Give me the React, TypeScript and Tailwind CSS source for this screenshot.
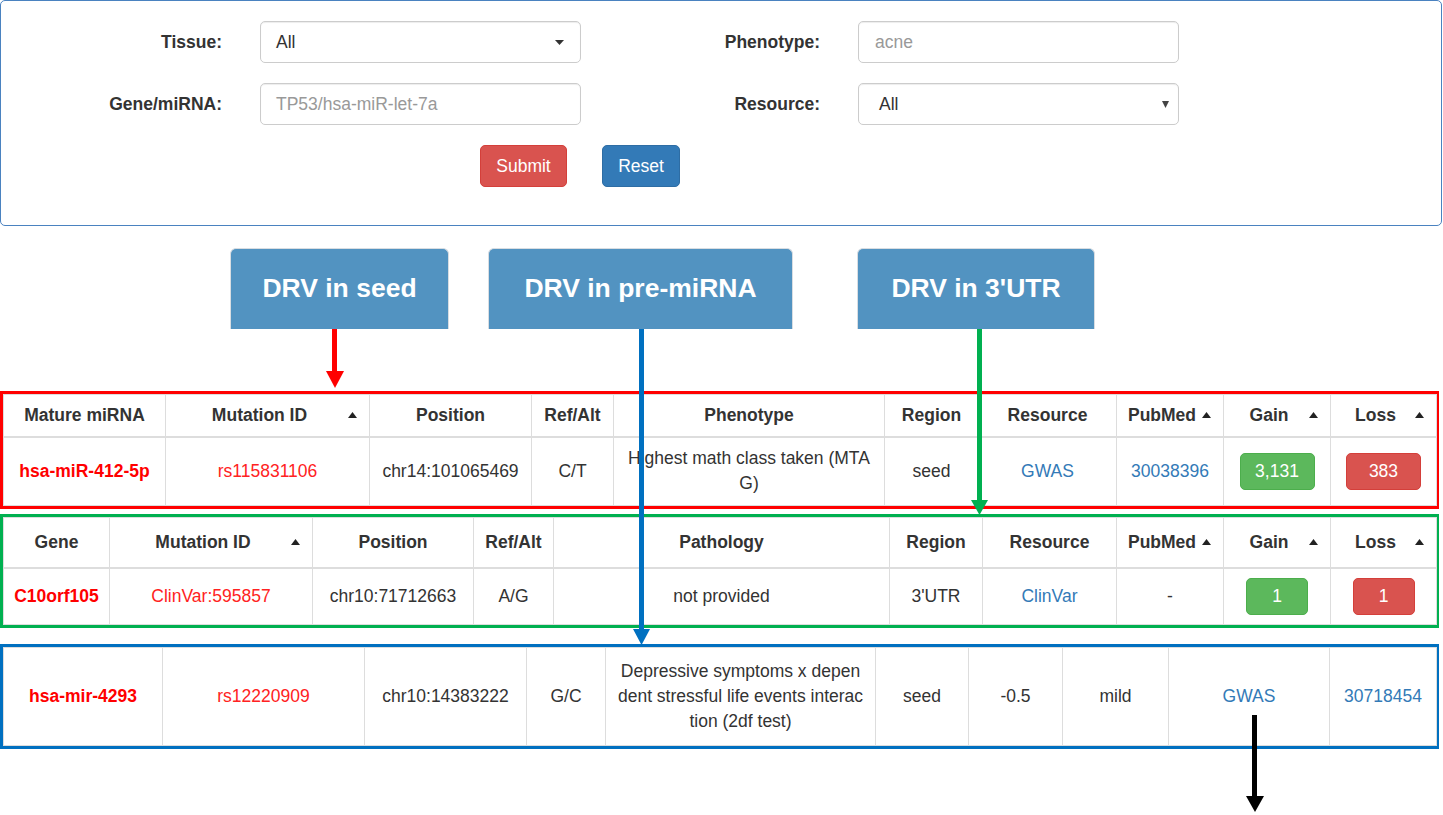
import React from 'react';

const font = { fontFamily: '"Liberation Sans", Arial, sans-serif' };

const SortCaret: React.FC = () => (
    <svg className="absolute right-[12px] top-1/2 -translate-y-1/2" width="9" height="6" viewBox="0 0 9 6">
        <polygon points="0,6 9,6 4.5,0" fill="#222" />
    </svg>
);

type Head = { label: string; sort?: boolean };

const HeaderCell: React.FC<{ head: Head; height: string }> = ({ head, height }) => (
    <th
        className={`relative ${height} border border-[#ddd] border-b-2 font-bold text-[#333] text-center align-middle py-0 ${head.sort ? 'pl-[6px] pr-[22px]' : 'px-[10px]'}`}
    >
        {head.label}
        {head.sort && <SortCaret />}
    </th>
);

const Badge: React.FC<{ value: string; color: 'green' | 'red'; width: string }> = ({ value, color, width }) => (
    <span
        className={`inline-flex items-center justify-center h-[37px] rounded-[5px] text-white border ${width} ${
            color === 'green' ? 'bg-[#5cb85c] border-[#4cae4c]' : 'bg-[#d9534f] border-[#d43f3a]'
        }`}
    >
        {value}
    </span>
);

const td = 'border border-[#ddd] text-center align-middle px-[10px] text-[#333] leading-[25px]';

const DrvBox: React.FC<{ label: string; width: string }> = ({ label, width }) => (
    <div
        className={`${width} h-[81px] bg-[#5293c1] rounded-t-[6px] border-x border-t border-[#d8dde2] flex items-center justify-center text-white font-bold text-[26.5px]`}
    >
        {label}
    </div>
);

// annotation arrows drawn over the page
const Arrows: React.FC = () => (
    <svg className="absolute left-0 top-0 pointer-events-none" width="1443" height="815" viewBox="0 0 1443 815">
        <line x1="334.5" y1="329" x2="334.5" y2="373" stroke="#ff0000" strokeWidth="5" />
        <polygon points="326,371 344,371 335,388" fill="#ff0000" />
        <line x1="641.5" y1="329" x2="641.5" y2="631" stroke="#0070c0" strokeWidth="5" />
        <polygon points="633,629 650,629 641.5,645" fill="#0070c0" />
        <line x1="979.5" y1="329" x2="979.5" y2="502" stroke="#00b050" strokeWidth="5" />
        <polygon points="971,500 988,500 979.5,515" fill="#00b050" />
        <line x1="1254.5" y1="715" x2="1254.5" y2="798" stroke="#000" strokeWidth="5" />
        <polygon points="1246,796 1264,796 1255,812" fill="#000" />
    </svg>
);

const seedHeads: Head[] = [
    { label: 'Mature miRNA' },
    { label: 'Mutation ID', sort: true },
    { label: 'Position' },
    { label: 'Ref/Alt' },
    { label: 'Phenotype' },
    { label: 'Region' },
    { label: 'Resource' },
    { label: 'PubMed', sort: true },
    { label: 'Gain', sort: true },
    { label: 'Loss', sort: true },
];

const utrHeads: Head[] = [
    { label: 'Gene' },
    { label: 'Mutation ID', sort: true },
    { label: 'Position' },
    { label: 'Ref/Alt' },
    { label: 'Pathology' },
    { label: 'Region' },
    { label: 'Resource' },
    { label: 'PubMed', sort: true },
    { label: 'Gain', sort: true },
    { label: 'Loss', sort: true },
];

const seedCols = [162, 204, 162, 82, 271, 94, 138, 107, 107, 106];
const utrCols = [106, 203, 161, 80, 336, 93, 134, 107, 107, 106];
const preCols = [159, 202, 162, 79, 270, 93, 94, 106, 161, 107];

const Cols: React.FC<{ widths: number[] }> = ({ widths }) => (
    <colgroup>
        {widths.map((w, i) => (
            <col key={i} style={{ width: w }} />
        ))}
    </colgroup>
);

export default function App() {
    return (
        <div className="relative w-[1443px] h-[815px] bg-white text-[17.5px] text-[#333] overflow-hidden" style={font}>
            {/* search form */}
            <div className="w-[1442px] h-[226px] border border-[#4a82c0] rounded-[5px] pt-[20px]">
                <div className="flex items-center h-[42px]">
                    <label className="w-[221px] text-right font-bold">Tissue:</label>
                    <div className="ml-[38px] w-[321px] h-[42px] border border-[#ccc] rounded-[5px] shadow-[inset_0_1px_1px_rgba(0,0,0,0.075)] flex items-center justify-between pl-[15px] pr-[16px]">
                        <span className="text-[#333]">All</span>
                        <svg width="9" height="5" viewBox="0 0 9 5">
                            <polygon points="0,0 9,0 4.5,5" fill="#333" />
                        </svg>
                    </div>
                    <label className="w-[239px] text-right font-bold">Phenotype:</label>
                    <div className="ml-[38px] w-[321px] h-[42px] border border-[#ccc] rounded-[5px] shadow-[inset_0_1px_1px_rgba(0,0,0,0.075)] flex items-center pl-[16px]">
                        <span className="text-[#999]">acne</span>
                    </div>
                </div>
                <div className="flex items-center h-[42px] mt-[20px]">
                    <label className="w-[221px] text-right font-bold">Gene/miRNA:</label>
                    <div className="ml-[38px] w-[321px] h-[42px] border border-[#ccc] rounded-[5px] shadow-[inset_0_1px_1px_rgba(0,0,0,0.075)] flex items-center pl-[15px]">
                        <span className="text-[#999]">TP53/hsa-miR-let-7a</span>
                    </div>
                    <label className="w-[239px] text-right font-bold">Resource:</label>
                    <div className="ml-[38px] w-[321px] h-[42px] border border-[#ccc] rounded-[5px] shadow-[inset_0_1px_1px_rgba(0,0,0,0.075)] flex items-center justify-between pl-[20px] pr-[9px]">
                        <span className="text-[#333]">All</span>
                        <svg width="7" height="7" viewBox="0 0 7 7">
                            <polygon points="0,0 7,0 3.5,7" fill="#444" />
                        </svg>
                    </div>
                </div>
                <div className="flex items-center mt-[20px]">
                    <button className="ml-[479px] w-[87px] h-[42px] rounded-[5px] bg-[#d9534f] border border-[#d43f3a] text-white">
                        Submit
                    </button>
                    <button className="ml-[35px] w-[78px] h-[42px] rounded-[5px] bg-[#337ab7] border border-[#2e6da4] text-white">
                        Reset
                    </button>
                </div>
            </div>

            {/* region labels */}
            <div className="flex mt-[22px] ml-[230px] gap-[39px]">
                <DrvBox label="DRV in seed" width="w-[219px]" />
                <DrvBox label="DRV in pre-miRNA" width="w-[305px]" />
                <div className="ml-[25px]">
                    <DrvBox label="DRV in 3'UTR" width="w-[238px]" />
                </div>
            </div>

            {/* DRV in seed */}
            <div className="mt-[62px] w-[1439px] border-[3px] border-[#ff0000]">
                <table className="w-full table-fixed border-collapse">
                    <Cols widths={seedCols} />
                    <thead>
                        <tr>
                            {seedHeads.map((h) => (
                                <HeaderCell key={h.label} head={h} height="h-[42px]" />
                            ))}
                        </tr>
                    </thead>
                    <tbody>
                        <tr>
                            <td className={`${td} h-[69px] font-bold text-[#ff0000]`}>hsa-miR-412-5p</td>
                            <td className={`${td} text-[#ff2222]`}>rs115831106</td>
                            <td className={td}>chr14:101065469</td>
                            <td className={td}>C/T</td>
                            <td className={td}>Highest math class taken (MTA G)</td>
                            <td className={td}>seed</td>
                            <td className={`${td} text-[#337ab7]`}>GWAS</td>
                            <td className={`${td} text-[#337ab7]`}>30038396</td>
                            <td className={td}>
                                <Badge value="3,131" color="green" width="w-[75px]" />
                            </td>
                            <td className={td}>
                                <Badge value="383" color="red" width="w-[75px]" />
                            </td>
                        </tr>
                    </tbody>
                </table>
            </div>

            {/* DRV in 3'UTR */}
            <div className="mt-[5px] w-[1439px] border-[3px] border-[#00b050]">
                <table className="w-full table-fixed border-collapse">
                    <Cols widths={utrCols} />
                    <thead>
                        <tr>
                            {utrHeads.map((h) => (
                                <HeaderCell key={h.label} head={h} height="h-[50px]" />
                            ))}
                        </tr>
                    </thead>
                    <tbody>
                        <tr>
                            <td className={`${td} h-[57px] font-bold text-[#ff0000]`}>C10orf105</td>
                            <td className={`${td} text-[#ff2222]`}>ClinVar:595857</td>
                            <td className={td}>chr10:71712663</td>
                            <td className={td}>A/G</td>
                            <td className={td}>not provided</td>
                            <td className={td}>3'UTR</td>
                            <td className={`${td} text-[#337ab7]`}>ClinVar</td>
                            <td className={td}>-</td>
                            <td className={td}>
                                <Badge value="1" color="green" width="w-[62px]" />
                            </td>
                            <td className={td}>
                                <Badge value="1" color="red" width="w-[62px]" />
                            </td>
                        </tr>
                    </tbody>
                </table>
            </div>

            {/* DRV in pre-miRNA */}
            <div className="mt-[16px] w-[1439px] border-[3px] border-[#0070c0]">
                <table className="w-full table-fixed border-collapse">
                    <Cols widths={preCols} />
                    <tbody>
                        <tr>
                            <td className={`${td} h-[98px] font-bold text-[#ff0000]`}>hsa-mir-4293</td>
                            <td className={`${td} text-[#ff2222]`}>rs12220909</td>
                            <td className={td}>chr10:14383222</td>
                            <td className={td}>G/C</td>
                            <td className={td}>
                                Depressive symptoms x depen
                                <br />
                                dent stressful life events interac
                                <br />
                                tion (2df test)
                            </td>
                            <td className={td}>seed</td>
                            <td className={td}>-0.5</td>
                            <td className={td}>mild</td>
                            <td className={`${td} text-[#337ab7]`}>GWAS</td>
                            <td className={`${td} text-[#337ab7]`}>30718454</td>
                        </tr>
                    </tbody>
                </table>
            </div>

            <Arrows />
        </div>
    );
}
